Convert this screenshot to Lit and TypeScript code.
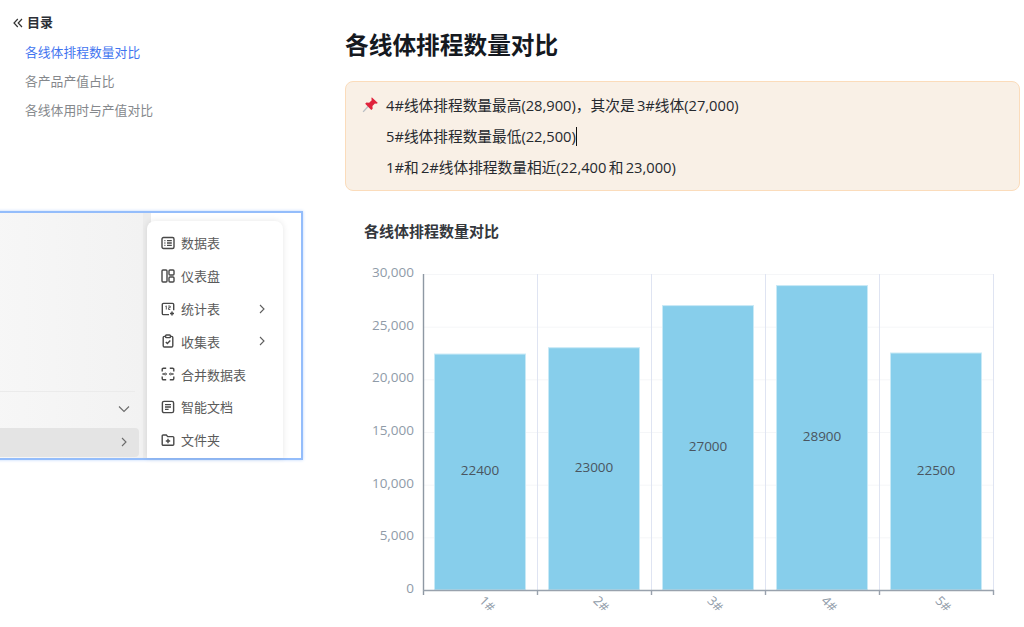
import { LitElement, html, css, svg } from 'lit';
import { customElement } from 'lit/decorators.js';

const toc = [
  { text: '各线体排程数量对比', active: true },
  { text: '各产品产值占比', active: false },
  { text: '各线体用时与产值对比', active: false },
];

const icons: Record<string, unknown> = {
  table: svg`<rect x="1" y="1.5" width="12" height="11" rx="1.5"/><path d="M3.4 4.6h1M3.4 7h1M3.4 9.4h1M6 4.6h4.8M6 7h4.8M6 9.4h4.8"/>`,
  dash: svg`<rect x="1" y="1" width="5" height="12" rx="1"/><rect x="8" y="1" width="5" height="5" rx="1"/><rect x="8" y="8" width="5" height="5" rx="1"/>`,
  stat: svg`<path d="M8 12.6H2.5a1.2 1.2 0 0 1-1.2-1.2V2.6a1.2 1.2 0 0 1 1.2-1.2h9a1.2 1.2 0 0 1 1.2 1.2v5.6"/><path d="M4.4 4.4l.9-.5v3.6M7.2 4h2v1.7H7.6v1.8h1.7" stroke-width="0.9"/><path d="M11 9.4v4M9 11.4h4" stroke-width="1.5"/>`,
  form: svg`<path d="M4.2 2.4H3.4A1.2 1.2 0 0 0 2.2 3.6v8.2A1.2 1.2 0 0 0 3.4 13h7.2a1.2 1.2 0 0 0 1.2-1.2V3.6a1.2 1.2 0 0 0-1.2-1.2h-.8"/><rect x="4.6" y="1" width="4.8" height="2.6" rx="0.8"/><path d="M4.8 8l1.6 1.6 2.9-3"/>`,
  merge: svg`<path d="M1.2 4.6V2.4a1.2 1.2 0 0 1 1.2-1.2h2.8M8.8 1.2h2.8a1.2 1.2 0 0 1 1.2 1.2v2.2M12.8 9.4v2.2a1.2 1.2 0 0 1-1.2 1.2H8.8M5.2 12.8H2.4a1.2 1.2 0 0 1-1.2-1.2V9.4M1.4 7h3.2M9.4 7h3.2"/><path d="M4.4 5.6L5.6 7 4.4 8.4M9.6 5.6L8.4 7l1.2 1.4" stroke-width="1"/>`,
  doc: svg`<rect x="1.4" y="1.4" width="11.2" height="11.2" rx="1.6"/><path d="M4 4.6h6M4 7h6M4 9.4h3.6"/>`,
  folder: svg`<path d="M1.2 3a1 1 0 0 1 1-1h3.1l1.4 1.6h5.1a1 1 0 0 1 1 1v6.6a1 1 0 0 1-1 1H2.2a1 1 0 0 1-1-1z"/><path d="M7 5.8v4.4M4.8 8h4.4"/>`,
};

const menu = [
  { icon: 'table', label: '数据表', more: false },
  { icon: 'dash', label: '仪表盘', more: false },
  { icon: 'stat', label: '统计表', more: true },
  { icon: 'form', label: '收集表', more: true },
  { icon: 'merge', label: '合并数据表', more: false },
  { icon: 'doc', label: '智能文档', more: false },
  { icon: 'folder', label: '文件夹', more: false },
];

const notes = [
  '4#线体排程数量最高(28,900)，其次是 3#线体(27,000)',
  '5#线体排程数量最低(22,500)',
  '1#和 2#线体排程数量相近(22,400 和 23,000)',
];

const lines = [
  { name: '1#', value: 22400 },
  { name: '2#', value: 23000 },
  { name: '3#', value: 27000 },
  { name: '4#', value: 28900 },
  { name: '5#', value: 22500 },
];

// chart canvas, in svg coordinates
const LEFT = 78;
const STEP = 114;
const TOP = 19;
const BASE = 335;
const yOf = (v: number) => BASE - ((BASE - TOP) * v) / 30000;

@customElement('app-chart')
export class AppChart extends LitElement {
  static styles = css`
    :host { display: block; }
    svg { display: block; font-family: 'Open Sans', 'Noto Sans CJK SC', sans-serif; }
    .grid-h { stroke: #f5f6f8; }
    .grid-v { stroke: #dfe4f2; }
    .axis { stroke: #8e98a3; stroke-width: 1.4; }
    .axis-x { stroke: #99a2ad; stroke-width: 1.4; }
    .tick { fill: #8f9ba8; font-size: 13.5px; }
    .cat { fill: #8f9ba8; font-size: 13px; }
    .bar { fill: #87ceeb; stroke: #c8e9f6; stroke-width: 1; }
    .val { fill: #4a5560; font-size: 13.5px; }
  `;

  render() {
    const ticks = [0, 5000, 10000, 15000, 20000, 25000, 30000];
    return html`<svg width="675" height="372" viewBox="0 0 675 372">
      ${ticks.map((t) => svg`
        ${t ? svg`<line class="grid-h" x1=${LEFT} x2=${LEFT + STEP * 5} y1=${yOf(t) + 0.5} y2=${yOf(t) + 0.5}></line>` : ''}
        <text class="tick" x="69" y=${yOf(t) + 3} text-anchor="end">${t.toLocaleString('en-US')}</text>
      `)}
      ${[1, 2, 3, 4, 5].map((i) => svg`<line class="grid-v" x1=${LEFT + STEP * i + 0.5} x2=${LEFT + STEP * i + 0.5} y1=${TOP} y2=${BASE}></line>`)}
      ${lines.map((l, i) => {
        const y = yOf(l.value);
        const x = LEFT + 11.5 + STEP * i;
        return svg`
          <rect class="bar" x=${x} y=${y} width="91" height=${BASE - y}></rect>
          <text class="val" x=${x + 45.5} y=${y + (BASE - y) / 2 + 3} text-anchor="middle">${l.value}</text>
          <text class="cat" transform="translate(${LEFT + 61 + STEP * i} ${BASE + 17}) rotate(45)" text-anchor="middle">${l.name}</text>
        `;
      })}
      <line class="axis" x1=${LEFT + 0.5} x2=${LEFT + 0.5} y1=${TOP} y2=${BASE + 5}></line>
      <line class="axis-x" x1=${LEFT} x2=${LEFT + STEP * 5 + 1} y1=${BASE + 0.5} y2=${BASE + 0.5}></line>
      ${[1, 2, 3, 4, 5].map((i) => svg`<line class="axis-x" x1=${LEFT + STEP * i + 0.5} x2=${LEFT + STEP * i + 0.5} y1=${BASE} y2=${BASE + 5}></line>`)}
    </svg>`;
  }
}

@customElement('app-root')
export class AppRoot extends LitElement {
  static styles = css`
    :host {
      display: flex;
      height: 627px;
      overflow: hidden;
      background: #fff;
      font-family: 'Open Sans', 'Noto Sans CJK SC', sans-serif;
    }

    .side {
      width: 345px;
      flex: none;
      padding-top: 14px;
      box-sizing: border-box;
    }
    .toc-head {
      display: flex;
      align-items: center;
      gap: 4px;
      height: 18px;
      padding-left: 13px;
      font-size: 13px;
      line-height: 18px;
      font-weight: 700;
      color: #2b2f36;
    }
    .toc-head span { position: relative; top: -1px; }
    .toc-head svg { fill: none; stroke: #333; stroke-width: 1.2; }
    .toc { margin-top: 6px; padding-left: 25px; }
    .toc div {
      height: 29.2px;
      line-height: 29.2px;
      font-size: 12.8px;
      color: #85888c;
    }
    .toc div.active { color: #3f74f0; }

    .panel {
      position: relative;
      margin: 85px 0 0 -10px;
      width: 313px;
      height: 249px;
      box-sizing: border-box;
      border: 2px solid #94bdfb;
      box-shadow: 0 0 3px #bcd5fb;
      background: #fff;
      display: flex;
    }
    .tree {
      width: 159px;
      flex: none;
      background: linear-gradient(90deg, #f7f7f7, #f2f2f2);
      display: flex;
      flex-direction: column;
      justify-content: flex-end;
      box-sizing: border-box;
      padding-bottom: 1px;
      border-right: 8px solid #ececec;
    }
    .tree-row {
      display: flex;
      align-items: center;
      justify-content: flex-end;
      box-sizing: border-box;
    }
    .tree-row svg { fill: none; stroke: #6b6b6b; stroke-width: 1.1; }
    .tree-open { height: 36px; width: 143px; border-top: 1px solid #ebebeb; margin-bottom: 1px; }
    .tree-open svg { margin-right: 5px; }
    .tree-sel { height: 29px; width: 147px; background: #e4e4e4; border-radius: 0 4px 4px 0; padding-right: 11px; }

    .menu {
      position: absolute;
      left: 155px;
      top: 8px;
      width: 136px;
      height: 237px;
      box-sizing: border-box;
      padding-top: 6px;
      background: #fff;
      border-radius: 8px 8px 0 0;
      box-shadow: 0 0 6px rgba(0, 0, 0, 0.1);
    }
    .item {
      display: flex;
      align-items: center;
      height: 32.8px;
      padding: 0 17px 0 14px;
      font-size: 13px;
      color: #5a5a5a;
    }
    .item .ico { width: 14px; height: 14px; fill: none; stroke: #484848; stroke-width: 1.4; flex: none; margin-right: 6px; }
    .item span { flex: 1; }
    .item .more { width: 8px; height: 10px; fill: none; stroke: #5e5e5e; stroke-width: 1.1; flex: none; }

    .main { flex: 1; padding-right: 4px; min-width: 0; }
    h1 {
      margin: 27px 0 0;
      height: 36px;
      line-height: 36px;
      font-size: 23.7px;
      font-weight: 700;
      color: #15191f;
    }
    .note {
      position: relative;
      margin-top: 18px;
      height: 110px;
      box-sizing: border-box;
      padding: 8px 0 0 40px;
      background: #f9f0e6;
      border: 1px solid #fbdcbb;
      border-radius: 8px;
      font-size: 14.7px;
      word-spacing: -1.5px;
      color: #26292e;
    }
    .note p { margin: 0; height: 31px; line-height: 31px; }
    .pin { position: absolute; left: 16px; top: 14px; }
    .caret {
      display: inline-block;
      width: 1px;
      height: 19px;
      background: #111;
      vertical-align: -4px;
    }
    .chart-title {
      margin: 28px 0 0 19px;
      height: 24px;
      line-height: 24px;
      font-size: 15px;
      font-weight: 700;
      color: #35383d;
    }
    app-chart { margin-top: 12px; }
  `;

  render() {
    return html`
      <div class="side">
        <div class="toc-head">
          <svg width="10" height="10" viewBox="0 0 10 10"><path d="M4.8 1L1 5l3.8 4M9 1L5.2 5 9 9"/></svg>
          <span>目录</span>
        </div>
        <div class="toc">
          ${toc.map((t) => html`<div class=${t.active ? 'active' : ''}>${t.text}</div>`)}
        </div>
        <div class="panel">
          <div class="tree">
            <div class="tree-row tree-open">
              <svg width="12" height="8" viewBox="0 0 12 8"><path d="M1 1.5l5 5 5-5"/></svg>
            </div>
            <div class="tree-row tree-sel">
              <svg width="8" height="10" viewBox="0 0 8 10"><path d="M2 1l4 4-4 4"/></svg>
            </div>
          </div>
          <div class="menu">
            ${menu.map((m) => html`<div class="item">
              <svg class="ico" viewBox="0 0 14 14">${icons[m.icon]}</svg>
              <span>${m.label}</span>
              ${m.more ? html`<svg class="more" viewBox="0 0 8 10"><path d="M2 1l4 4-4 4"/></svg>` : ''}
            </div>`)}
          </div>
        </div>
      </div>
      <div class="main">
        <h1>各线体排程数量对比</h1>
        <div class="note">
          <svg class="pin" width="17" height="17" viewBox="0 0 15 15">
            <path d="M1 14l4.5-5" stroke="#b9bec4" stroke-width="1.2" fill="none"/>
            <path d="M8.6 1l5.4 5.2-1.4.7-1.2-.3-2.2 2.3.2 2.4-1.2 1.1L2.8 6.9l1.1-1.2 2.4.2 2.3-2.2-.3-1.3z" fill="#e0233c"/>
          </svg>
          ${notes.map((n, i) => html`<p>${n}${i === 1 ? html`<i class="caret"></i>` : ''}</p>`)}
        </div>
        <div class="chart-title">各线体排程数量对比</div>
        <app-chart></app-chart>
      </div>
    `;
  }
}
